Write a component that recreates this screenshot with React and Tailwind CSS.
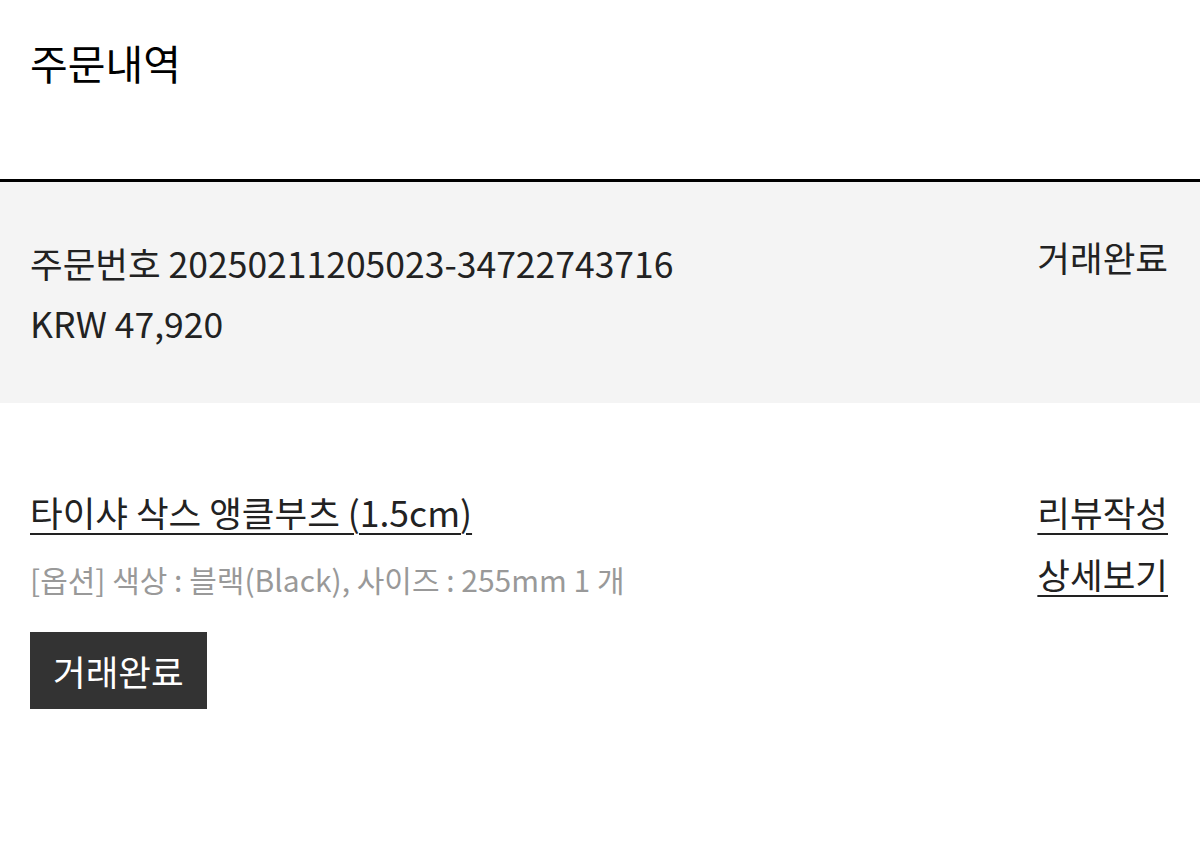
import React from 'react';

const FONT = "font-['Noto_Sans_CJK_KR',_'Noto_Sans',_sans-serif]";

const App = () => {
  return (
    <div className={`min-h-[859px] w-full bg-white text-[#222] ${FONT}`}>
      {/* 페이지 제목 */}
      <div className="h-[179px] px-[30px] pt-[34px]">
        <h1 className="text-[41px] leading-[56px] font-normal text-black">주문내역</h1>
      </div>

      {/* 주문 요약 */}
      <div className="border-t-[3px] border-black bg-[#f4f4f4] h-[224px] px-[30px] pt-[51px] flex justify-between">
        <div className="text-[35.5px] leading-[60px]">
          <p>주문번호 20250211205023-34722743716</p>
          <p>KRW 47,920</p>
        </div>
        <p className="text-[35.5px] leading-[60px] pr-[2px] -mt-[6px]">거래완료</p>
      </div>

      {/* 상품 */}
      <div className="px-[30px] pt-[81px] flex justify-between">
        <div>
          <a className="text-[35.5px] leading-[56px] underline underline-offset-[6px] decoration-2 cursor-pointer">
            타이샤 삭스 앵클부츠 (1.5cm)
          </a>
          <p className="mt-[14px] text-[30px] leading-[50px] text-[#999]">
            [옵션] 색상 : 블랙(Black), 사이즈 : 255mm 1 개
          </p>
          <button className="mt-[28px] bg-[#333] text-white text-[35.5px] h-[77px] px-[23px] leading-[77px]">
            거래완료
          </button>
        </div>
        <div className="flex flex-col items-end pr-[2px] gap-[6px]">
          <a className="text-[35.5px] leading-[56px] underline underline-offset-[6px] decoration-2 cursor-pointer">리뷰작성</a>
          <a className="text-[35.5px] leading-[56px] underline underline-offset-[6px] decoration-2 cursor-pointer">상세보기</a>
        </div>
      </div>
    </div>
  );
};

export default App;
